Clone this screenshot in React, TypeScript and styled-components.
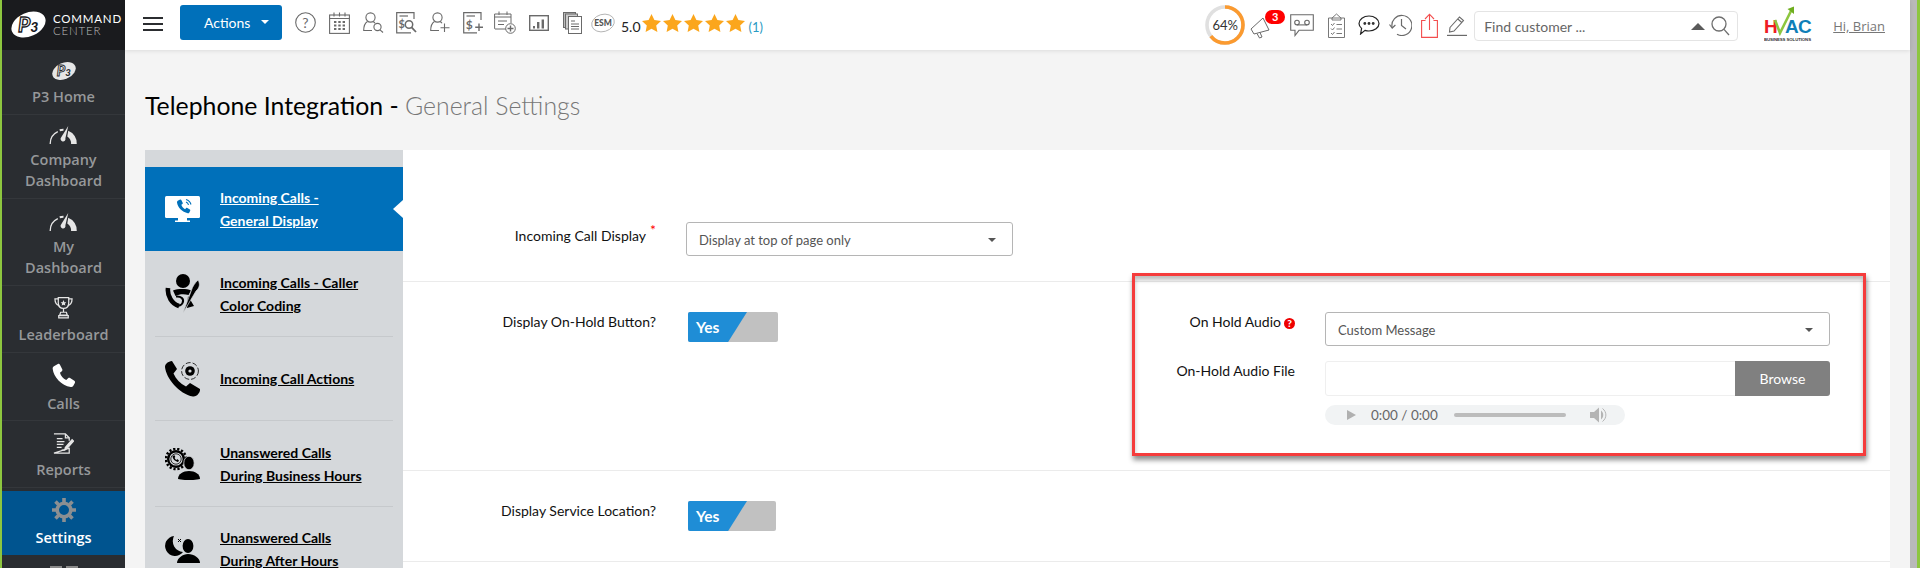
import React from "react";
import styled, { createGlobalStyle } from "styled-components";

const GlobalStyle = createGlobalStyle`
    html, body {
        margin: 0;
        padding: 0;
        height: 100%;
        overflow: hidden;
        background: #f4f4f4;
        font-family: "Lato", "Liberation Sans", sans-serif;
    }
    * { box-sizing: border-box; }
`;

const G = "#6a6a6a";
const PHONE_D =
    "M6.6 1 C7.4 .6 8.2 .9 8.6 1.7 L10.8 6 C11.1 6.7 11 7.4 10.4 7.9 L8.6 9.4 C9.4 12.2 11.6 15 14.6 16.4 L16.4 14.7 C16.9 14.2 17.7 14.1 18.3 14.5 L22.4 17.1 C23.1 17.6 23.3 18.4 22.9 19.1 L21.3 22 C20.8 22.8 19.9 23.2 19 23 C9.8 21.4 2.6 13.6 1.6 5.4 C1.5 4.4 2 3.5 2.8 3 Z";

const P3Mark = ({ w, fill, ink }: { w: number; fill: string; ink: string }) => (
    <svg width={w} height={w * 0.83} viewBox="0 0 40 33">
        <ellipse cx="20" cy="16.5" rx="20.5" ry="13.5" transform="rotate(-24 20 16.5)" fill={fill} />
        <text x="8" y="25" fontFamily="Lato, sans-serif" fontStyle="italic" fontWeight="700" fontSize="24" fill="none" stroke={ink} strokeWidth="1.5">P</text>
        <text x="22" y="25" fontFamily="Lato, sans-serif" fontStyle="italic" fontWeight="900" fontSize="16" fill={ink}>3</text>
    </svg>
);

const Gauge = () => (
    <svg width="29" height="18" viewBox="0 0 30 19" fill="none">
        <path d="M1 19 A14 14 0 0 1 9 6" stroke="#e6e6e6" strokeWidth="1.4" />
        <path d="M11 4.5 A14 14 0 0 1 15 4" stroke="#e6e6e6" strokeWidth="2" />
        <path d="M20 5 A14 14 0 0 1 29 19 H23 A9 9 0 0 0 19 11 Z" fill="#e6e6e6" />
        <path d="M20 0 L17 13 A2.6 2.6 0 1 1 12.6 12 Z" fill="#e6e6e6" />
    </svg>
);

const Trophy = () => (
    <svg width="19" height="23" viewBox="0 0 20 24" fill="none" stroke="#e6e6e6" strokeWidth="1.3">
        <path d="M4.5 1.5 H15.5 V7 C15.5 11 13 13 10 13 C7 13 4.5 11 4.5 7 Z" />
        <path d="M4.5 3 H1 C1 7 2.5 9 5.5 10 M15.5 3 H19 C19 7 17.5 9 14.5 10" />
        <path d="M10 13 V17 M7 17 H13 L14 20 H6 Z M5 20.5 H15 V23 H5 Z" />
        <path d="M10 4 L11 6.4 L13 6.6 L11.4 8 L12 10 L10 9 L8 10 L8.6 8 L7 6.6 L9 6.4 Z" fill="#e6e6e6" stroke="none" />
    </svg>
);

const Phone = ({ w, color }: { w: number; color: string }) => (
    <svg width={w} height={w} viewBox="0 0 24 24">
        <path fill={color} d={PHONE_D} />
    </svg>
);

const ReportIcon = () => (
    <svg width="21" height="21" viewBox="0 0 22 22" fill="none" stroke="#e6e6e6" strokeWidth="1.3">
        <path d="M1 1 H13 L17 5 V8 M17 16 V21 H1 Z" />
        <path d="M13 1 V5 H17 M4 6 H10 M4 9 H12 M4 12 H11 M4 15 H9 M9 18 H13" />
        <path d="M13 15 L20 7 L21.5 8.5 L14.5 16.5 L12.5 17 Z" fill="#e6e6e6" />
    </svg>
);

const Gear = ({ w, color }: { w: number; color: string }) => (
    <svg width={w} height={w} viewBox="0 0 24 24" fill="none" stroke={color}>
        <circle cx="12" cy="12" r="6.8" strokeWidth="3.6" />
        <g strokeWidth="3.6">
            <path d="M12 0 V4 M12 20 V24 M0 12 H4 M20 12 H24 M3.5 3.5 L6.4 6.4 M17.6 17.6 L20.5 20.5 M3.5 20.5 L6.4 17.6 M17.6 6.4 L20.5 3.5" />
        </g>
    </svg>
);

const GridStub = () => (
    <svg width="28" height="14" viewBox="0 0 28 14" fill="#8a8a8a">
        <rect x="0" y="0" width="12" height="14" />
        <rect x="16" y="0" width="12" height="14" />
    </svg>
);

const navItems = [
    { icon: <P3Mark w={24} fill="#e6e6e6" ink="#2a2d31" />, label: ["P3 Home"], h: 65, top: 11 },
    { icon: <Gauge />, label: ["Company", "Dashboard"], h: 84, top: 11 },
    { icon: <Gauge />, label: ["My", "Dashboard"], h: 87, top: 14 },
    { icon: <Trophy />, label: ["Leaderboard"], h: 67, top: 10 },
    { icon: <Phone w={25} color="#fff" />, label: ["Calls"], h: 68, top: 10 },
    { icon: <ReportIcon />, label: ["Reports"], h: 67, top: 12 },
];

const IconHelp = () => (
    <svg width="21" height="21" viewBox="0 0 21 21" fill="none">
        <circle cx="10.5" cy="10.5" r="9.8" stroke={G} strokeWidth="1.1" />
        <text x="10.5" y="15.5" textAnchor="middle" fontFamily="Lato, sans-serif" fontSize="14" fill={G}>?</text>
    </svg>
);
const IconCalendar = () => (
    <svg width="21" height="22" viewBox="0 0 21 22" fill="none" stroke={G} strokeWidth="1.1">
        <rect x=".6" y="3" width="19.8" height="18.4" />
        <path d="M.6 6.5 H20.4 M5 .5 V4.5 M10.5 .5 V4.5 M16 .5 V4.5" />
        <path stroke="none" fill={G} d="M5 9h2.4v2H5zM9.3 9h2.4v2H9.3zM13.6 9H16v2h-2.4zM5 12.5h2.4v2H5zM9.3 12.5h2.4v2H9.3zM13.6 12.5H16v2h-2.4zM5 16h2.4v2H5zM9.3 16h2.4v2H9.3zM13.6 16H16v2h-2.4z" />
    </svg>
);
const IconUserSearch = () => (
    <svg width="21" height="21" viewBox="0 0 21 21" fill="none" stroke={G} strokeWidth="1.1">
        <circle cx="7.5" cy="5.5" r="4.6" />
        <path d="M4.5 9.5 C2 11 .7 15 .7 18.5 H9 M10 9.5 C11 10 11.6 10.6 12 11.2" />
        <circle cx="14.5" cy="15" r="3.6" />
        <path d="M17 17.8 L20 20.5" />
    </svg>
);
const IconDollarSearch = () => (
    <svg width="21" height="22" viewBox="0 0 21 22" fill="none" stroke={G} strokeWidth="1.2">
        <path d="M15 20.8 H.7 V.7 H18 V7" />
        <path d="M3.5 4 H12" />
        <text x="2.6" y="16" fontFamily="Lato, sans-serif" fontWeight="700" fontSize="11" fill={G} stroke="none">$</text>
        <circle cx="13" cy="12.5" r="3.7" strokeWidth="1.5" />
        <path d="M15.6 15.3 L20 20" strokeWidth="1.8" />
    </svg>
);
const IconUserPlus = () => (
    <svg width="20" height="21" viewBox="0 0 20 21" fill="none" stroke={G} strokeWidth="1.1">
        <circle cx="7.5" cy="5.5" r="4.6" />
        <path d="M4.5 9.5 C2 11 .7 15 .7 18.5 H9 M10 9.5 C11 10 11.6 10.6 12 11.2" />
        <path d="M14.5 11.5 V20 M10.5 15.8 H19.5" />
    </svg>
);
const IconDollarPlus = () => (
    <svg width="21" height="22" viewBox="0 0 21 22" fill="none" stroke={G} strokeWidth="1.2">
        <path d="M14 20.8 H.7 V.7 H18 V8" />
        <path d="M3.5 4 H12" />
        <text x="2.8" y="17" fontFamily="Lato, sans-serif" fontWeight="700" fontSize="12" fill={G} stroke="none">$</text>
        <path d="M16 11.5 V19 M12.2 15.2 H20" strokeWidth="1.4" />
    </svg>
);
const IconCalendarPlus = () => (
    <svg width="22" height="23" viewBox="0 0 22 23" fill="none" stroke={G} strokeWidth="1">
        <path d="M12 18 H1 Q.6 18 .6 17 V3 H17 V12" />
        <path d="M.6 6 H17 M5 .5 V4 M13 .5 V4 M4 10 H13 M4 13.5 H10" />
        <circle cx="16.5" cy="17.5" r="4.8" />
        <path d="M16.5 14.5 V20.5 M13.5 17.5 H19.5" strokeWidth="1.4" />
    </svg>
);
const IconChart = () => (
    <svg width="20" height="16" viewBox="0 0 20 16">
        <rect x=".7" y=".7" width="18.6" height="14.6" fill="none" stroke={G} strokeWidth="1.4" />
        <path fill={G} d="M4 11h2v2.4H4zM8 7h2.4v6.4H8zM12.6 4.4H15v9h-2.4z" />
    </svg>
);
const IconDocs = () => (
    <svg width="19" height="22" viewBox="0 0 19 22" fill="#fff" stroke={G} strokeWidth="1">
        <rect x=".5" y=".5" width="12" height="15" fill="#bbb" />
        <rect x="2.5" y="2" width="12" height="15" fill="#ccc" />
        <rect x="5.5" y="4.5" width="13" height="17" />
        <path d="M8 9 H12 M8 12 H16 M8 14.5 H16 M8 17 H16" />
    </svg>
);
const IconEsm = () => (
    <svg width="24" height="20" viewBox="0 0 24 20" fill="none">
        <ellipse cx="12" cy="10" rx="11.5" ry="8.6" transform="rotate(-16 12 10)" stroke="#aaa" strokeWidth=".8" />
        <text x="12" y="13" textAnchor="middle" fontFamily="Lato, sans-serif" fontWeight="900" fontSize="8.5" fill="#555">ESM</text>
    </svg>
);
const Star = () => (
    <svg width="19" height="18" viewBox="0 0 19 18">
        <path fill="#fba61c" d="M9.5 0 L12.4 6 L19 6.9 L14.2 11.4 L15.4 18 L9.5 14.8 L3.6 18 L4.8 11.4 L0 6.9 L6.6 6 Z" />
    </svg>
);
const Donut = () => (
    <svg width="40" height="40" viewBox="0 0 40 40" fill="none">
        <circle cx="20" cy="20" r="18" stroke="#e0e0e0" strokeWidth="3.6" />
        <circle cx="20" cy="20" r="18" stroke="#fb9a2f" strokeWidth="3.6" strokeDasharray="72.4 113.1" transform="rotate(-90 20 20)" />
    </svg>
);
const IconMegaphone = () => (
    <svg width="20" height="22" viewBox="0 0 20 22" fill="none" stroke={G} strokeWidth="1">
        <path d="M1 12 L13 1 L19 13 L4 17 Z" />
        <path d="M7 16.5 L9.5 21 L12 20 L10 15.5" />
    </svg>
);
const IconVoicemail = () => (
    <svg width="24" height="23" viewBox="0 0 24 23" fill="none" stroke={G} strokeWidth="1.1">
        <path d="M.7 .7 H23.3 V16.3 H9 L5 21.5 V16.3 H.7 Z" />
        <circle cx="7" cy="8.6" r="2.3" />
        <circle cx="17" cy="8.6" r="2.3" />
        <path d="M7 10.9 H17" />
    </svg>
);
const IconClipboard = () => (
    <svg width="17" height="25" viewBox="0 0 17 25" fill="none" stroke={G} strokeWidth=".9">
        <path d="M.5 5 H16.5 V24.5 H.5 Z" />
        <path d="M4 5 L8.5 1 L13 5 V7 H4 Z" />
        <path d="M3 11 L4.5 12.5 L6.5 10 M8.5 11.5 H14 M3 15.5 L4.5 17 L6.5 14.5 M8.5 16 H14 M3 20 L4.5 21.5 L6.5 19 M8.5 20.5 H14" />
    </svg>
);
const IconChat = () => (
    <svg width="22" height="20" viewBox="0 0 22 20" fill="none">
        <path d="M11 1 C16.5 1 21 4.3 21 8.5 C21 12.7 16.5 16 11 16 C9.6 16 8.2 15.8 7 15.4 L2.6 19 L3.6 13.4 C1.9 12 1 10.4 1 8.5 C1 4.3 5.5 1 11 1 Z" stroke="#222" strokeWidth="1.2" />
        <circle cx="6.8" cy="8.5" r="1.4" fill="#333" />
        <circle cx="11" cy="8.5" r="1.4" fill="#333" />
        <circle cx="15.2" cy="8.5" r="1.4" fill="#333" />
    </svg>
);
const IconHistory = () => (
    <svg width="23" height="22" viewBox="0 0 23 22" fill="none" stroke={G} strokeWidth="1.2">
        <path d="M3 13 A10 10 0 1 1 8 20.2" />
        <path d="M.5 10.5 L3.2 14 L6.4 11" />
        <path d="M12.5 5 V11.5 L17 15" />
    </svg>
);
const IconShare = () => (
    <svg width="17" height="25" viewBox="0 0 17 25" fill="none" stroke="#f34d4d" strokeWidth="1.1">
        <path d="M4.5 7.5 H.6 V24.4 H16.4 V7.5 H12.5" />
        <path d="M8.5 17 V1.5 M4 6 L8.5 1.2 L13 6" />
    </svg>
);
const IconPencil = () => (
    <svg width="20" height="21" viewBox="0 0 20 21" fill="none" stroke={G} strokeWidth="1.1">
        <path d="M3 12.5 L12.5 2 L16.5 5.5 L7 16 L2.5 17 Z M10.8 4 L14.8 7.5" />
        <path d="M0 20.4 H20" strokeWidth="1.2" />
    </svg>
);
const IconSearch = () => (
    <svg width="19" height="20" viewBox="0 0 19 20" fill="none" stroke="#6e6e6e" strokeWidth="1.3">
        <circle cx="8" cy="8" r="7" />
        <path d="M13 13.4 L18 19" />
    </svg>
);
const HvacMark = () => (
    <svg width="48" height="35" viewBox="0 0 48 35">
        <text x="0" y="27" fontFamily="Liberation Sans, sans-serif" fontWeight="700" fontSize="19" fill="#ee1c25">H</text>
        <text x="21" y="27" fontFamily="Liberation Sans, sans-serif" fontWeight="700" fontSize="19" letterSpacing="-.6" fill="#0f7fb8">AC</text>
        <path d="M11 14 L16 27 L27 5" fill="none" stroke="#8dc63f" strokeWidth="2.6" />
        <path d="M23.5 3 L30 .5 L30 8 Z" fill="#6fae1f" />
        <text x="0" y="34.5" fontFamily="Liberation Sans, sans-serif" fontWeight="700" fontSize="4.3" textLength="47" fill="#333">BUSINESS SOLUTIONS</text>
    </svg>
);

const MonitorPhone = () => (
    <svg width="35" height="27" viewBox="0 0 35 27">
        <rect x="0" y="0" width="35" height="22" rx="1.5" fill="#fff" />
        <path fill="#fff" d="M13 22h9v2.5h3V26H10v-1.5h3z" />
        <g transform="translate(11 3) scale(.62)">
            <path fill="#0070ba" d={PHONE_D} />
        </g>
        <path d="M21 3.5 A7 7 0 0 1 26 8.5 M21 6 A4 4 0 0 1 23.5 9" stroke="#0070ba" strokeWidth="1.1" fill="none" />
    </svg>
);

const CallerColor = () => (
    <svg width="36" height="40" viewBox="0 0 36 40">
        <circle cx="18" cy="7" r="7" />
        <path d="M8 16.5 C13 14.6 22 14.6 26 16.5 L23.5 21 C19 19.5 14 20 10.5 22 Z" />
        <path d="M3 14 C2 22 7 30 14 32" fill="none" stroke="#000" strokeWidth="4.6" />
        <path d="M11 22.5 C16 22 19.5 25 17.5 29 C16.5 31.5 14 32 12 31" fill="none" stroke="#000" strokeWidth="2" />
        <path d="M23 22 L29 32 L22 34 Z" />
        <path d="M33 6 C35.5 10 34.5 14 31 17 L18 39 L26.5 16 C27.5 12.5 30 9 33 6 Z" stroke="#d5d8db" strokeWidth=".7" />
    </svg>
);

const CallActions = () => (
    <svg width="36" height="36" viewBox="0 0 36 36">
        <path d="M7 0 L12 8 L8.5 12.5 C11 18 15 22.5 21 25.5 L25 22 L35 28 C35.5 31 32 36 28 35.5 C14 33 1 17 0 6 C0 3 3 .5 7 0 Z" />
        <circle cx="25" cy="10" r="4.8" />
        <circle cx="25" cy="10" r="1.6" fill="#d5d8db" />
        <circle cx="25" cy="10" r="8.4" fill="none" stroke="#000" strokeWidth=".8" strokeDasharray="5 2" />
    </svg>
);

const BusinessHours = () => (
    <svg width="36" height="32" viewBox="0 0 36 32">
        <circle cx="11" cy="11" r="9" />
        <circle cx="11" cy="11" r="10" fill="none" stroke="#000" strokeWidth="2.6" strokeDasharray="2.2 1.8" />
        <circle cx="11" cy="11" r="6.6" fill="#d5d8db" />
        <circle cx="11" cy="11" r="5.2" fill="none" stroke="#000" strokeWidth=".8" />
        <g transform="translate(7 7) scale(.3)">
            <path d={PHONE_D} />
        </g>
        <ellipse cx="24" cy="15" rx="5.2" ry="6.8" stroke="#d5d8db" strokeWidth=".8" />
        <path d="M13 31 C13 26 18 23 24 23 C30 23 35 26 35 31 C30 32.5 18 32.5 13 31 Z" />
    </svg>
);

const AfterHours = () => (
    <svg width="36" height="29" viewBox="0 0 36 29">
        <path d="M9 1 A10 10 0 1 0 18 17 A11 11 0 0 1 9 1 Z" />
        <path d="M13 4 L16 7 M16 4 L13 7" stroke="#000" strokeWidth="1" />
        <ellipse cx="23" cy="11" rx="5.4" ry="7" />
        <path d="M12 28 C12 23 18 19 23 19 C29 19 35 23 35 28 Z" />
    </svg>
);

const menuItems = [
    { icon: <CallerColor />, lines: ["Incoming Calls - Caller", "Color Coding"], h: 86 },
    { icon: <CallActions />, lines: ["Incoming Call Actions"], h: 84 },
    { icon: <BusinessHours />, lines: ["Unanswered Calls", "During Business Hours"], h: 86 },
    { icon: <AfterHours />, lines: ["Unanswered Calls", "During After Hours"], h: 85 },
];

const tools = [
    { el: <IconHelp />, gap: 13 },
    { el: <IconCalendar />, gap: 13 },
    { el: <IconUserSearch />, gap: 12 },
    { el: <IconDollarSearch />, gap: 13 },
    { el: <IconUserPlus />, gap: 13 },
    { el: <IconDollarPlus />, gap: 10 },
    { el: <IconCalendarPlus />, gap: 13 },
    { el: <IconChart />, gap: 14 },
    { el: <IconDocs />, gap: 9 },
    { el: <IconEsm />, gap: 12 },
];

const App = () => {
    return (
        <Page>
            <GlobalStyle />
            <Sidebar>
                <Brand>
                    <P3Mark w={35} fill="#fff" ink="#1a1b1e" />
                    <BrandText>
                        <BrandTop>COMMAND</BrandTop>
                        <BrandBottom>CENTER</BrandBottom>
                    </BrandText>
                </Brand>
                {navItems.map(({ icon, label, h, top }) => (
                    <NavItem key={label.join()} $h={h} $top={top}>
                        <NavIcon>{icon}</NavIcon>
                        {label.map((l) => (
                            <NavLabel key={l}>{l}</NavLabel>
                        ))}
                    </NavItem>
                ))}
                <NavActive>
                    <Gear w={24} color="#8b8f92" />
                    <NavLabelActive>Settings</NavLabelActive>
                </NavActive>
                <NavStub>
                    <GridStub />
                </NavStub>
            </Sidebar>
            <Main>
                <Topbar>
                    <Burger>
                        <span />
                        <span />
                        <span />
                    </Burger>
                    <ActionsButton>
                        Actions
                        <Caret $color="#fff" />
                    </ActionsButton>
                    <ToolRow>
                        {tools.map(({ el, gap }, i) => (
                            <Tool key={i} $gap={gap}>
                                {el}
                            </Tool>
                        ))}
                    </ToolRow>
                    <Rating>5.0</Rating>
                    <Stars>
                        {[0, 1, 2, 3, 4].map((i) => (
                            <Star key={i} />
                        ))}
                    </Stars>
                    <RatingCount>(1)</RatingCount>
                    <RightTools>
                        <DonutWrap>
                            <Donut />
                            <DonutText>64%</DonutText>
                        </DonutWrap>
                        <MegaWrap>
                            <IconMegaphone />
                            <Badge>3</Badge>
                        </MegaWrap>
                        <Tool $gap={14}><IconVoicemail /></Tool>
                        <Tool $gap={13}><IconClipboard /></Tool>
                        <Tool $gap={9}><IconChat /></Tool>
                        <Tool $gap={9}><IconHistory /></Tool>
                        <Tool $gap={9}><IconShare /></Tool>
                        <Tool $gap={7}><IconPencil /></Tool>
                        <SearchBox>
                            <SearchText>Find customer ...</SearchText>
                            <SearchCaret />
                            <IconSearch />
                        </SearchBox>
                        <HvacLogo>
                            <HvacMark />
                        </HvacLogo>
                        <Greeting>Hi, Brian</Greeting>
                    </RightTools>
                </Topbar>
                <Content>
                    <Title>
                        Telephone Integration - <TitleSub>General Settings</TitleSub>
                    </Title>
                    <Panel>
                        <SideMenu>
                            <ActiveItem>
                                <MenuIcon><MonitorPhone /></MenuIcon>
                                <MenuText>
                                    <u>Incoming Calls -</u>
                                    <u>General Display</u>
                                </MenuText>
                            </ActiveItem>
                            {menuItems.map(({ icon, lines, h }) => (
                                <MenuItem key={lines.join()} $h={h}>
                                    <MenuIcon>{icon}</MenuIcon>
                                    <MenuText>
                                        {lines.map((l) => (
                                            <u key={l}>{l}</u>
                                        ))}
                                    </MenuText>
                                </MenuItem>
                            ))}
                        </SideMenu>
                        <FormArea>
                            <FirstRow>
                                <FieldLabel $width={253} $offset={4}>
                                    Incoming Call Display<Req>*</Req>
                                </FieldLabel>
                                <Select $width={327}>
                                    Display at top of page only
                                    <Caret $color="#555" />
                                </Select>
                            </FirstRow>
                            <HoldRow>
                                <HoldLeft>
                                    <FieldLabel $width={253}>Display On-Hold Button?</FieldLabel>
                                    <Toggle $width={90}>
                                        <ToggleOn>Yes</ToggleOn>
                                    </Toggle>
                                </HoldLeft>
                                <HoldRight>
                                    <FieldLine>
                                        <FieldLabel $width={149}>
                                            On Hold Audio<HelpDot>?</HelpDot>
                                        </FieldLabel>
                                        <Select $width={505}>
                                            Custom Message
                                            <Caret $color="#555" />
                                        </Select>
                                    </FieldLine>
                                    <FieldLine>
                                        <FieldLabel $width={149}>On-Hold Audio File</FieldLabel>
                                        <FileInput>
                                            <FileButton>Browse</FileButton>
                                        </FileInput>
                                    </FieldLine>
                                    <AudioBar>
                                        <PlayTri />
                                        <AudioTime>0:00 / 0:00</AudioTime>
                                        <AudioTrack />
                                        <svg width="18" height="18" viewBox="0 0 18 18" fill="#b4b4b4">
                                            <path d="M1 6 H5 L10 1.5 V16.5 L5 12 H1 Z" />
                                            <path d="M12 4.5 C15 6.5 15 11.5 12 13.5 Z" />
                                            <path d="M13.5 2.5 C18 6 18 12 13.5 15.5" fill="none" stroke="#b4b4b4" />
                                        </svg>
                                    </AudioBar>
                                </HoldRight>
                            </HoldRow>
                            <LocationRow>
                                <FieldLabel $width={253}>Display Service Location?</FieldLabel>
                                <Toggle $width={88}>
                                    <ToggleOn>Yes</ToggleOn>
                                </Toggle>
                            </LocationRow>
                            <Annotation />
                        </FormArea>
                    </Panel>
                </Content>
            </Main>
            <ScrollEdge />
        </Page>
    );
};

const Page = styled.div`
    display: flex;
    width: 100vw;
    height: 100vh;
    overflow: hidden;
    background: #f4f4f4;
`;

const Sidebar = styled.div`
    flex: 0 0 125px;
    display: flex;
    flex-direction: column;
    border-left: 2px solid #8dc63f;
    background: #2a2d31;
`;

const Brand = styled.div`
    flex: 0 0 50px;
    display: flex;
    align-items: center;
    gap: 7px;
    padding-left: 9px;
    background: #1a1b1e;
`;

const BrandText = styled.div`
    display: flex;
    flex-direction: column;
    font-family: "Lato", sans-serif;
    font-size: 11.5px;
    line-height: 12px;
    letter-spacing: 0.8px;
`;

const BrandTop = styled.span`
    color: #fff;
`;

const BrandBottom = styled.span`
    color: #bdbdbd;
    font-weight: 300;
`;

const NavItem = styled.div<{ $h: number; $top: number }>`
    flex: 0 0 ${(p) => p.$h}px;
    display: flex;
    flex-direction: column;
    align-items: center;
    padding-top: ${(p) => p.$top}px;
    border-bottom: 1px solid #34373b;
`;

const NavIcon = styled.div`
    display: flex;
    justify-content: center;
    margin-bottom: 5px;
`;

const NavLabel = styled.div`
    font-family: "Open Sans", sans-serif;
    font-size: 14.5px;
    font-weight: 600;
    line-height: 21px;
    color: #96989a;
`;

const NavActive = styled.div`
    flex: 0 0 64px;
    margin-top: 3px;
    display: flex;
    flex-direction: column;
    align-items: center;
    padding-top: 7px;
    background: #00548f;
`;

const NavLabelActive = styled(NavLabel)`
    color: #fff;
    margin-top: 5px;
`;

const NavStub = styled.div`
    display: flex;
    justify-content: center;
    padding-top: 11px;
`;

const Main = styled.div`
    flex: 0 0 1785px;
    display: flex;
    flex-direction: column;
`;

const Topbar = styled.div`
    flex: 0 0 50px;
    display: flex;
    align-items: center;
    padding-left: 18px;
    background: #fff;
    box-shadow: 0 1px 4px rgba(0, 0, 0, 0.1);
    position: relative;
    z-index: 1;
`;

const Burger = styled.div`
    display: flex;
    flex-direction: column;
    gap: 4px;
    width: 20px;
    margin: -3px 17px 0 0;
    span {
        height: 2px;
        background: #2b2d30;
    }
`;

const Caret = styled.i<{ $color: string }>`
    display: block;
    border-left: 4px solid transparent;
    border-right: 4px solid transparent;
    border-top: 4px solid ${(p) => p.$color};
`;

const ActionsButton = styled.div`
    width: 102px;
    height: 35px;
    margin-top: -6px;
    display: flex;
    align-items: center;
    gap: 11px;
    padding-left: 24px;
    background: #0070ba;
    border-radius: 3px;
    color: #fff;
    font-size: 14px;
`;

const ToolRow = styled.div`
    display: flex;
    align-items: center;
    margin: -5px 0 0 13px;
`;

const Tool = styled.div<{ $gap: number }>`
    display: flex;
    margin-right: ${(p) => p.$gap}px;
`;

const Rating = styled.span`
    margin-left: -6px;
    margin-top: 3px;
    font-size: 14px;
    color: #222;
`;

const Stars = styled.div`
    display: flex;
    gap: 2px;
    margin: -4px 0 0 1px;
`;

const RatingCount = styled.span`
    margin-left: 4px;
    margin-top: 3px;
    font-size: 13px;
    color: #2a9bc4;
`;

const RightTools = styled.div`
    display: flex;
    align-items: center;
    margin-left: auto;
`;

const DonutWrap = styled.div`
    position: relative;
    width: 40px;
    height: 40px;
    display: flex;
`;

const DonutText = styled.span`
    position: absolute;
    inset: 0;
    display: flex;
    align-items: center;
    justify-content: center;
    font-size: 13px;
    color: #333;
`;

const MegaWrap = styled.div`
    position: relative;
    display: flex;
    margin: 5px 20px 0 5px;
`;

const Badge = styled.span`
    position: absolute;
    left: 15px;
    top: -7px;
    width: 20px;
    height: 14px;
    border-radius: 8px;
    display: flex;
    align-items: center;
    justify-content: center;
    background: #f00;
    color: #fff;
    font-size: 11px;
    font-weight: 700;
`;

const SearchBox = styled.div`
    width: 264px;
    height: 30px;
    margin-top: 2px;
    display: flex;
    align-items: center;
    padding: 0 7px 0 9px;
    border: 1px solid #e4e4e4;
    border-radius: 4px;
`;

const SearchText = styled.span`
    flex: 1;
    font-size: 14px;
    color: #666;
`;

const SearchCaret = styled.i`
    display: block;
    margin-right: 6px;
    border-left: 7px solid transparent;
    border-right: 7px solid transparent;
    border-bottom: 7px solid #5a5a5a;
`;

const HvacLogo = styled.div`
    width: 48px;
    margin-left: 26px;
    display: flex;
    margin-top: -4px;
`;

const Greeting = styled.span`
    margin: 2px 25px 0 21px;
    font-family: "Open Sans", sans-serif;
    font-size: 13px;
    color: #777;
    text-decoration: underline;
`;

const Content = styled.div`
    flex: 1;
    display: flex;
    flex-direction: column;
    min-height: 0;
    padding: 0 20px;
`;

const Title = styled.h1`
    flex: 0 0 100px;
    margin: 0;
    padding-top: 41px;
    font-size: 24.8px;
    font-weight: 400;
    line-height: 30px;
    color: #000;
`;

const TitleSub = styled.span`
    color: #777;
    font-weight: 300;
`;

const Panel = styled.div`
    flex: 1;
    display: flex;
    min-height: 0;
    background: #fff;
`;

const SideMenu = styled.div`
    flex: 0 0 258px;
    padding-top: 17px;
    background: #d5d8db;
`;

const ActiveItem = styled.div`
    position: relative;
    height: 84px;
    display: flex;
    align-items: center;
    padding-left: 20px;
    background: #0070ba;
    color: #fff;
    &::after {
        content: "";
        position: absolute;
        right: 0;
        top: 33px;
        border-top: 9px solid transparent;
        border-bottom: 9px solid transparent;
        border-right: 10px solid #fff;
    }
`;

const MenuItem = styled.div<{ $h: number }>`
    height: ${(p) => p.$h}px;
    margin: 0 10px;
    display: flex;
    align-items: center;
    padding-left: 10px;
    border-bottom: 1px solid #c6c9cc;
    color: #000;
`;

const MenuIcon = styled.div`
    flex: 0 0 55px;
    display: flex;
    align-items: center;
`;

const MenuText = styled.div`
    display: flex;
    flex-direction: column;
    font-size: 14px;
    font-weight: 700;
    line-height: 23px;
`;

const FormArea = styled.div`
    flex: 1;
    position: relative;
`;

const BaseRow = styled.div`
    display: flex;
    border-bottom: 1px solid #ebebeb;
`;

const FirstRow = styled(BaseRow)`
    height: 132px;
    padding-top: 72px;
`;

const HoldRow = styled(BaseRow)`
    height: 189px;
    padding-top: 30px;
`;

const LocationRow = styled(BaseRow)`
    height: 91px;
    padding-top: 30px;
`;

const HoldLeft = styled.div`
    flex: 0 0 743px;
    display: flex;
    align-items: flex-start;
`;

const HoldRight = styled.div`
    display: flex;
    flex-direction: column;
    gap: 15px;
`;

const FieldLine = styled.div`
    display: flex;
`;

const FieldLabel = styled.label<{ $width: number; $offset?: number }>`
    flex: 0 0 ${(p) => p.$width}px;
    margin-right: 30px;
    padding-top: ${(p) => p.$offset ?? 0}px;
    text-align: right;
    font-size: 14px;
    line-height: 20px;
    color: #111;
`;

const Req = styled.sup`
    margin-left: 4px;
    color: #f00;
    font-size: 14px;
    line-height: 0;
`;

const HelpDot = styled.span`
    display: inline-flex;
    align-items: center;
    justify-content: center;
    width: 11px;
    height: 11px;
    margin-left: 3px;
    border-radius: 50%;
    background: #e00;
    color: #fff;
    font-size: 10px;
    font-weight: 900;
`;

const Select = styled.div<{ $width: number }>`
    width: ${(p) => p.$width}px;
    height: 34px;
    display: flex;
    align-items: center;
    justify-content: space-between;
    padding: 2px 16px 0 12px;
    border: 1px solid #b5b5b5;
    border-radius: 3px;
    font-size: 13px;
    color: #555;
`;

const Toggle = styled.div<{ $width: number }>`
    width: ${(p) => p.$width}px;
    height: 30px;
    margin-left: 2px;
    border-radius: 2px;
    background: #c1c1c1;
    overflow: hidden;
`;

const ToggleOn = styled.div`
    width: 59px;
    height: 30px;
    padding-left: 8px;
    clip-path: polygon(0 0, 100% 0, 68% 100%, 0 100%);
    background: #1f8dd6;
    color: #fff;
    font-size: 15.5px;
    font-weight: 700;
    line-height: 30px;
`;

const FileInput = styled.div`
    width: 505px;
    height: 35px;
    display: flex;
    justify-content: flex-end;
    border: 1px solid #efefef;
    border-radius: 3px;
`;

const FileButton = styled.div`
    width: 95px;
    margin: -1px -1px -1px 0;
    display: flex;
    align-items: center;
    justify-content: center;
    border-radius: 0 3px 3px 0;
    background: #808080;
    color: #fff;
    font-size: 14px;
`;

const AudioBar = styled.div`
    width: 300px;
    height: 20px;
    margin: -6px 0 0 179px;
    display: flex;
    align-items: center;
    padding-left: 22px;
    border-radius: 10px;
    background: #f1f3f4;
`;

const PlayTri = styled.i`
    display: block;
    margin-right: 15px;
    border-top: 5px solid transparent;
    border-bottom: 5px solid transparent;
    border-left: 9px solid #b0b0b0;
`;

const AudioTime = styled.span`
    font-size: 13.5px;
    color: #666;
`;

const AudioTrack = styled.div`
    width: 112px;
    height: 4px;
    margin: 0 23px 0 16px;
    border-radius: 2px;
    background: #bcbcbc;
`;

const Annotation = styled.div`
    position: absolute;
    left: 729px;
    top: 123px;
    width: 734px;
    height: 183px;
    border: 3px solid #f53c3c;
    box-shadow: 1px 4px 5px rgba(0, 0, 0, 0.45), inset 0 4px 4px rgba(0, 0, 0, 0.25);
    pointer-events: none;
`;

const ScrollEdge = styled.div`
    flex: 0 0 10px;
    border-right: 3px solid #8dc63f;
    background: #b9b9b9;
`;

export default App;
